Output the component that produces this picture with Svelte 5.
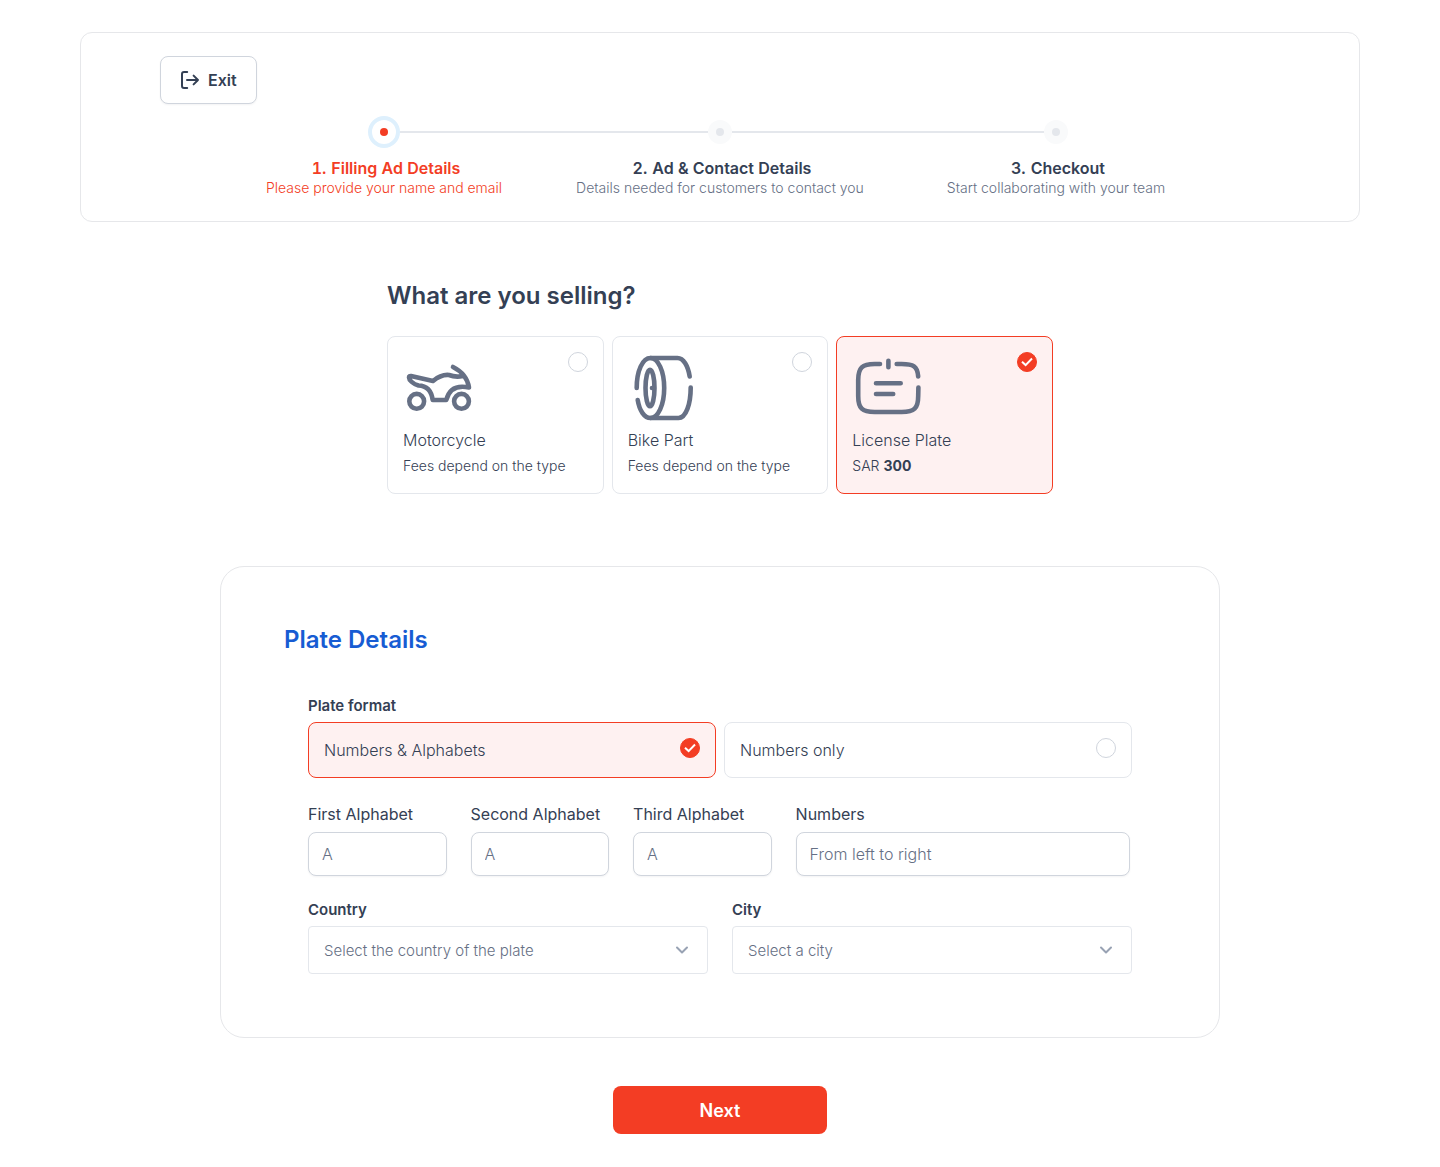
<script>
  const steps = [
    { number: '1.', title: 'Filling Ad Details', note: 'Please provide your name and email' },
    { number: '2.', title: 'Ad & Contact Details', note: 'Details needed for customers to contact you' },
    { number: '3.', title: 'Checkout', note: 'Start collaborating with your team' }
  ];
  const current = 0;

  const products = [
    { id: 'motorcycle', name: 'Motorcycle' },
    { id: 'part', name: 'Bike Part' },
    { id: 'plate', name: 'License Plate', currency: 'SAR', fee: '300' }
  ];
  const formats = [
    { id: 'mixed', name: 'Numbers & Alphabets' },
    { id: 'numbers', name: 'Numbers only' }
  ];
  const plateInputs = [
    { id: 'first', label: 'First Alphabet', hint: 'A' },
    { id: 'second', label: 'Second Alphabet', hint: 'A' },
    { id: 'third', label: 'Third Alphabet', hint: 'A' },
    { id: 'digits', label: 'Numbers', hint: 'From left to right' }
  ];
  const places = [
    { id: 'country', label: 'Country', hint: 'Select the country of the plate' },
    { id: 'city', label: 'City', hint: 'Select a city' }
  ];

  let product = $state('plate');
  let format = $state('mixed');
</script>

{#snippet check()}
  <svg class="check" viewBox="0 0 20 20" aria-hidden="true"><path d="M5 9.7 8.6 13.1 15 6.5" /></svg>
{/snippet}

<header class="top">
  <button class="exit" type="button">
    <svg viewBox="0 0 20 20" aria-hidden="true">
      <path d="M7.2 2H4Q2 2 2 4V16Q2 18 4 18H7.2M7 10H18M13.6 5.6 18 10 13.6 14.4" />
    </svg>
    Exit
  </button>
  <ol class="steps">
    {#each steps as step, i}
      <li class="step" class:active={i === current}>
        <div class="track"><span class="line"></span><span class="marker"></span><span class="line"></span></div>
        <p class="step-title"><span>{step.number}</span><span>{step.title}</span></p>
        <p class="step-note">{step.note}</p>
      </li>
    {/each}
  </ol>
</header>

<main>
  <section class="selling">
    <h1 id="selling-title">What are you selling?</h1>
    <div class="products" role="radiogroup" aria-labelledby="selling-title">
      {#each products as item}
        <label class="choice product">
          <svg class="art" viewBox="0 0 72 72" aria-hidden="true">
            {#if item.id === 'motorcycle'}
              <circle cx="13.7" cy="49.3" r="7.4" />
              <circle cx="58.5" cy="49.3" r="7.4" />
              <path d="M50 15C58 19 64.5 26 66 35.5C54 33 46 37 43.3 48H29.7C28.5 39 24.5 33.8 15.5 33.5C10 32 6 28 6 25.5C6 24.3 7 23.8 8 24L30 29C36 24 41 22.5 46 23C51 25 55 25 60 24" />
            {:else if item.id === 'part'}
              <path d="M8.7 36C8.7 19 14.5 6 22.5 6C30 6 36.2 19 36.2 36S30 66 22.5 66C16.5 66 11.5 59 9.7 48" />
              <path d="M22.5 6H49.5C55.5 6 60 14 61.7 24.5M62.7 35.5C62.7 52 58 66 50.5 66H22.5" />
              <ellipse cx="22" cy="36" rx="4.5" ry="18.2" />
              <path d="M24 36H24.5" />
            {:else}
              <path d="M28 12H22.7C10.2 12 6.2 15.5 6.2 28V44C6.2 56.5 10.2 60 22.7 60H49.7C62.2 60 66.2 56.5 66.2 44L66.4 35.5M44.7 12H49.7C61.2 12 65.5 14 66.2 24.5M36.4 8.8V15.2M24 31.3H48.7M24 42H41.2" />
            {/if}
          </svg>
          <span class="radio">
            <input type="radio" name="product" value={item.id} bind:group={product} />
            {@render check()}
          </span>
          <span class="name">{item.name}</span>
          <span class="fee">
            {#if item.fee}{item.currency} <strong>{item.fee}</strong>{:else}Fees depend on the type{/if}
          </span>
        </label>
      {/each}
    </div>
  </section>

  <form class="panel" id="plate-form" onsubmit={(e) => e.preventDefault()}>
    <h2>Plate Details</h2>
    <div class="fields">
      <div class="field">
        <span class="caption" id="format-title">Plate format</span>
        <div class="formats" role="radiogroup" aria-labelledby="format-title">
          {#each formats as item}
            <label class="choice format">
              <span class="name">{item.name}</span>
              <span class="radio">
                <input type="radio" name="format" value={item.id} bind:group={format} />
                {@render check()}
              </span>
            </label>
          {/each}
        </div>
      </div>

      <div class="plate">
        {#each plateInputs as item}
          <div class="field">
            <label class="caption medium" for={item.id}>{item.label}</label>
            <input class="text" id={item.id} type="text" placeholder={item.hint} />
          </div>
        {/each}
      </div>

      <div class="places">
        {#each places as item}
          <div class="field">
            <label class="caption" for={item.id}>{item.label}</label>
            <div class="select">
              <select id={item.id}><option>{item.hint}</option></select>
              <svg viewBox="0 0 20 20" aria-hidden="true"><path d="M5 7.5 10 12.5 15 7.5" /></svg>
            </div>
          </div>
        {/each}
      </div>
    </div>
  </form>

  <button class="next" type="submit" form="plate-form">Next</button>
</main>

<style>
  :global(body) {
    background: #fff;
    color: #344054;
    font-family: Inter, 'Liberation Sans', sans-serif;
    font-size: 15px;
    line-height: 24px;
  }

  :global(*) {
    box-sizing: border-box;
  }

  h1, h2, p, ol {
    margin: 0;
    padding: 0;
  }

  button, input, select {
    margin: 0;
    font-family: inherit;
    color: inherit;
  }

  svg {
    fill: none;
    stroke: currentColor;
    stroke-width: 2;
    stroke-linecap: round;
    stroke-linejoin: round;
  }

  .top {
    margin: 32px 80px 0;
    padding: 23px 79px;
    border: 1px solid #e6e7ea;
    border-radius: 12px;
  }

  .exit {
    display: flex;
    align-items: center;
    gap: 8px;
    height: 48px;
    padding: 0 19px;
    border: 1px solid #d0d5dd;
    border-radius: 8px;
    background: #fff;
    box-shadow: 0 1px 2px rgba(16, 24, 40, 0.05);
    font-size: 16px;
    font-weight: 600;
  }

  .exit svg {
    width: 20px;
    height: 20px;
  }

  .steps {
    display: grid;
    grid-template-columns: repeat(3, 1fr);
    max-width: 1008px;
    margin: 12px auto 0;
    list-style: none;
    text-align: center;
  }

  .track {
    display: flex;
    align-items: center;
    height: 32px;
    margin-bottom: 10px;
  }

  .line {
    flex: 1;
    height: 2px;
    background: #e4e7ec;
  }

  .step:first-child .line:first-child,
  .step:last-child .line:last-child {
    visibility: hidden;
  }

  .marker {
    display: grid;
    place-items: center;
    width: 24px;
    height: 24px;
    border-radius: 50%;
    background: #f9fafb;
  }

  .marker::before {
    content: '';
    width: 8px;
    height: 8px;
    border-radius: 50%;
    background: #e4e7ec;
  }

  .active .marker {
    width: 32px;
    height: 32px;
    border: 4px solid #def0fd;
    background: #fff;
  }

  .active .marker::before {
    background: #f33d24;
  }

  .step-title {
    display: flex;
    justify-content: center;
    gap: 5px;
    padding-left: 4px;
    font-size: 16px;
    font-weight: 600;
    font-variant-numeric: tabular-nums;
    line-height: 20px;
  }

  .step-note {
    font-size: 14px;
    font-weight: 300;
    line-height: 20px;
    color: #667085;
  }

  .active .step-title,
  .active .step-note {
    color: #f33d24;
  }

  main {
    display: flex;
    flex-direction: column;
    align-items: center;
    padding: 58px 24px 33px;
  }

  h1, h2 {
    font-size: 24px;
    font-weight: 600;
    line-height: 32px;
  }

  .selling {
    width: 100%;
    max-width: 666px;
  }

  .products {
    display: grid;
    grid-template-columns: repeat(3, 1fr);
    gap: 8px;
    margin-top: 24px;
  }

  .choice {
    display: grid;
    grid-template-columns: 1fr auto;
    border: 1px solid #e4e7ec;
    border-radius: 8px;
    cursor: pointer;
  }

  .choice:has(input:checked) {
    border-color: #f33d24;
    background: #fef1f1;
  }

  .product {
    padding: 15px;
  }

  .name {
    font-size: 16px;
    font-weight: 300;
  }

  .product .name,
  .fee {
    grid-column: 1 / -1;
  }

  .product .name {
    margin-top: 4px;
  }

  .fee {
    margin-top: 2px;
    font-size: 14px;
    font-weight: 300;
  }

  .fee strong {
    font-weight: 700;
  }

  .art {
    width: 72px;
    height: 72px;
    color: #667085;
    stroke-width: 4.6;
  }

  .radio {
    display: grid;
    width: 20px;
    height: 20px;
  }

  .radio input {
    grid-area: 1 / 1;
    width: 20px;
    height: 20px;
    border: 1px solid #d0d5dd;
    border-radius: 50%;
    appearance: none;
    background: #fff;
  }

  .radio input:checked {
    border-color: #f33d24;
    background: #f33d24;
  }

  .check {
    grid-area: 1 / 1;
    z-index: 1;
    visibility: hidden;
    color: #fff;
    stroke-linecap: butt;
    stroke-linejoin: miter;
    pointer-events: none;
  }

  input:checked + .check {
    visibility: visible;
  }

  .panel {
    width: 100%;
    max-width: 1000px;
    margin: 72px 0 48px;
    padding: 57px 63px 63px;
    border: 1px solid #e6e7ea;
    border-radius: 24px;
  }

  h2 {
    color: #175cd3;
  }

  .fields {
    display: grid;
    gap: 24px;
    margin-top: 40px;
    padding: 0 24px;
  }

  .field {
    display: grid;
    gap: 6px;
    min-width: 0;
  }

  .caption {
    font-weight: 600;
    line-height: 20px;
  }

  .medium {
    font-size: 16px;
    font-weight: 400;
    line-height: 24px;
  }

  .formats {
    display: grid;
    grid-template-columns: 1fr 1fr;
    gap: 8px;
  }

  .format {
    padding: 15px;
  }

  .plate {
    display: grid;
    grid-template-columns: 29fr 29fr 29fr 70fr;
    gap: 24px;
    padding-right: 2px;
  }

  .text {
    width: 100%;
    height: 44px;
    padding: 0 13px;
    border: 1px solid #d0d5dd;
    border-radius: 8px;
    background: #fff;
    box-shadow: 0 1px 2px rgba(16, 24, 40, 0.05);
    font-size: 16px;
    font-weight: 300;
  }

  .text::placeholder {
    color: #667085;
    opacity: 1;
  }

  .places {
    display: grid;
    grid-template-columns: 1fr 1fr;
    gap: 24px;
  }

  .select {
    display: grid;
    align-items: center;
  }

  select {
    grid-area: 1 / 1;
    width: 100%;
    height: 48px;
    padding: 0 48px 0 15px;
    border: 1px solid #e4e7ec;
    border-radius: 4px;
    appearance: none;
    background: #fff;
    color: #667085;
    font-size: 15px;
    font-weight: 300;
  }

  .select svg {
    grid-area: 1 / 1;
    justify-self: end;
    width: 20px;
    height: 20px;
    margin-right: 16px;
    color: #98a2b3;
    pointer-events: none;
  }

  .next {
    width: 214px;
    height: 48px;
    border: 0;
    border-radius: 8px;
    background: #f33d24;
    color: #fff;
    font-size: 18px;
    font-weight: 600;
  }
</style>
